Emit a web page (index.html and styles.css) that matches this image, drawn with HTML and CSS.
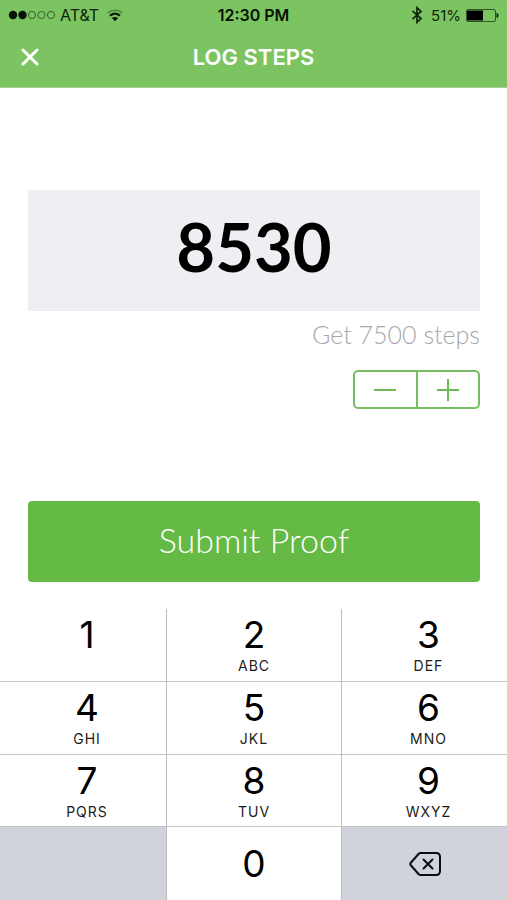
FILE: index.html
```
<!DOCTYPE html>
<html lang="en">
<head>
<meta charset="utf-8">
<meta name="viewport" content="width=device-width, initial-scale=1">
<title>Log Steps</title>
<link rel="stylesheet" href="styles.css">
</head>
<body>
<div class="screen">
  <header class="top">
    <div class="status">
      <div class="status-side">
        <svg class="signal" width="47" height="10" viewBox="0 0 47 10" aria-hidden="true">
          <g fill="#061203"><circle cx="5" cy="5" r="4.2"/><circle cx="14.5" cy="5" r="4.2"/></g>
          <g fill="none" stroke="#35602a" stroke-width="1"><circle cx="24" cy="5" r="3.6"/><circle cx="33.5" cy="5" r="3.6"/><circle cx="43" cy="5" r="3.6"/></g>
        </svg>
        <span class="carrier">AT&amp;T</span>
        <svg class="wifi" width="16" height="13" viewBox="0 0 16 13" fill="none" stroke-width="2.2" aria-hidden="true">
          <path d="M.8 3.800C5 .3 11 .3 15.200 3.800" stroke="#4c8040" stroke-width="1.500"/>
          <path d="M3 6.700C6 4.200 10 4.200 13 6.700" stroke="#0c1c08"/>
          <path d="M8 12.300 4.900 9C6.700 7.500 9.300 7.500 11.100 9Z" fill="#061203"/>
        </svg>
      </div>
      <span class="clock">12:30 PM</span>
      <div class="status-side status-right">
        <svg class="bluetooth" width="12" height="18" viewBox="0 0 12 18" fill="none" stroke="#10240b" stroke-width="1.700" aria-hidden="true">
          <path d="M1.500 4.800 10 12.500 6 16.300V1.700L10 5.500 1.500 13.200"/>
        </svg>
        <span class="percent">51%</span>
        <svg class="battery" width="33" height="13" viewBox="0 0 33 13" aria-hidden="true">
          <rect x=".5" y=".5" width="29" height="12" rx="1.500" fill="none" stroke="#2f5725"/>
          <rect x="1" y="1.500" width="16" height="10" fill="#000"/>
          <path d="M30.500 4C33.300 4.500 33.300 8.500 30.500 9Z" fill="#10240b"/>
        </svg>
      </div>
    </div>
    <div class="nav">
      <button class="close" type="button" aria-label="Close">
        <svg width="18" height="18" viewBox="0 0 18 18" fill="none" stroke="#fff" stroke-width="3" stroke-linecap="round" aria-hidden="true"><path d="M2 2 16 16M16 2 2 16"/></svg>
      </button>
      <h1 class="title">LOG STEPS</h1>
    </div>
  </header>

  <form class="entry">
    <input class="count" id="steps" type="text" inputmode="numeric" value="8530">
    <label class="goal" for="steps">Get 7500 steps</label>
    <div class="stepper">
      <button class="step" type="button" aria-label="Decrease steps">
        <svg width="22" height="22" viewBox="0 0 22 22" stroke="#70b957" stroke-width="2" aria-hidden="true"><path d="M0 11H22"/></svg>
      </button>
      <button class="step" type="button" aria-label="Increase steps">
        <svg width="22" height="22" viewBox="0 0 22 22" stroke="#70b957" stroke-width="2" aria-hidden="true"><path d="M0 11H22M11 0V22"/></svg>
      </button>
    </div>
    <button class="submit" type="button">Submit Proof</button>
  </form>

  <div class="keypad">
    <button class="key" type="button"><span class="digit">1</span></button>
    <button class="key" type="button"><span class="digit">2</span><span class="letters">ABC</span></button>
    <button class="key" type="button"><span class="digit">3</span><span class="letters">DEF</span></button>
    <button class="key" type="button"><span class="digit">4</span><span class="letters">GHI</span></button>
    <button class="key" type="button"><span class="digit">5</span><span class="letters">JKL</span></button>
    <button class="key" type="button"><span class="digit">6</span><span class="letters">MNO</span></button>
    <button class="key" type="button"><span class="digit">7</span><span class="letters">PQRS</span></button>
    <button class="key" type="button"><span class="digit">8</span><span class="letters">TUV</span></button>
    <button class="key" type="button"><span class="digit">9</span><span class="letters">WXYZ</span></button>
    <div class="key key-gray"></div>
    <button class="key key-center" type="button"><span class="digit">0</span></button>
    <button class="key key-gray key-center" type="button" aria-label="Delete">
      <svg width="32" height="24" viewBox="0 0 32 24" fill="none" stroke="#0b0d10" stroke-width="2" stroke-linejoin="round" stroke-linecap="round" aria-hidden="true">
        <path d="M11.500 1H27Q31 1 31 5V19Q31 23 27 23H11.500Q10.500 23 9.500 22L1.600 13Q.9 12 1.600 11L9.500 2Q10.500 1 11.500 1Z"/>
        <path d="M14.500 7.500 23.500 16.500M23.500 7.500 14.500 16.500"/>
      </svg>
    </button>
  </div>
</div>
</body>
</html>
```
FILE: styles.css
```
* {
  box-sizing: border-box;
}

body {
  margin: 0;
  background: #fff;
  color: #000;
  font-family: Inter, "Liberation Sans", sans-serif;
}

button {
  margin: 0;
  padding: 0;
  border: 0;
  background: none;
  color: inherit;
  font: inherit;
}

svg {
  display: block;
  flex: none;
}

.screen {
  display: flex;
  flex-direction: column;
  min-height: 100vh;
}

.top {
  background: #7cc462;
  border-bottom: 1px solid #a3cf93;
}

.status {
  display: grid;
  grid-template-columns: 1fr auto 1fr;
  align-items: center;
  height: 30px;
  padding: 0 8px;
  font-size: 16px;
  color: #10240b;
}

.status-side {
  display: flex;
  align-items: center;
  gap: 5px;
}

.status-right {
  justify-content: flex-end;
}

.carrier {
  margin-right: 3px;
}

.percent {
  margin-left: 3px;
  font-size: 15px;
}

.clock {
  font-weight: 600;
  color: #061203;
}

.nav {
  display: grid;
  grid-template-columns: 48px 1fr 48px;
  align-items: center;
  height: 57px;
  padding: 0 8px 4px;
}

.close {
  display: grid;
  place-items: center;
  width: 44px;
  height: 44px;
}

.title {
  margin: 0;
  color: #fff;
  font-size: 22px;
  font-weight: 600;
  text-align: center;
}

.entry {
  display: flex;
  flex-direction: column;
  align-items: flex-end;
  padding: 102px 27px 27px 28px;
  font-family: Lato, "Open Sans", sans-serif;
}

.count {
  width: 100%;
  height: 121px;
  padding: 0 0 10px;
  border: 0;
  border-radius: 0;
  background: #efeef3;
  color: #000;
  font-family: inherit;
  font-size: 67px;
  font-weight: 700;
  text-align: center;
}

.goal {
  margin-top: 7px;
  color: #a8a8a8;
  font-size: 25px;
  font-weight: 300;
  line-height: 32px;
}

.stepper {
  display: flex;
  width: 127px;
  height: 39px;
  margin-top: 20px;
  border: 2px solid #79bd62;
  border-radius: 5px;
}

.step {
  display: grid;
  flex: 1;
  place-items: center;
}

.step + .step {
  border-left: 2px solid #79bd62;
}

.submit {
  width: 100%;
  height: 81px;
  margin-top: 92px;
  padding-bottom: 4px;
  border-radius: 4px;
  background: #65b945;
  color: #fff;
  font-size: 34px;
  font-weight: 300;
}

.keypad {
  display: grid;
  flex: 1;
  grid-template-columns: 167fr 175fr 165fr;
  grid-template-rows: repeat(4, 1fr);
}

.key {
  display: flex;
  flex-direction: column;
  align-items: center;
  padding-top: 3px;
  border-right: 1px solid #bcbcbe;
  border-bottom: 1px solid #c4c4c6;
}

.key:nth-child(3n + 1),
.key:nth-child(3n) {
  padding-left: 8px;
}

.key:nth-child(3n) {
  border-right: 0;
}

.key:nth-child(n + 10) {
  padding-left: 0;
  border-bottom: 0;
}

.key-center {
  justify-content: center;
  padding-top: 0;
}

.key-gray {
  background: #d0d3db;
}

.digit {
  font-size: 37px;
  line-height: 45px;
}

.letters {
  color: #1c1c1c;
  font-size: 14px;
  line-height: 17px;
  letter-spacing: 1px;
}
```
